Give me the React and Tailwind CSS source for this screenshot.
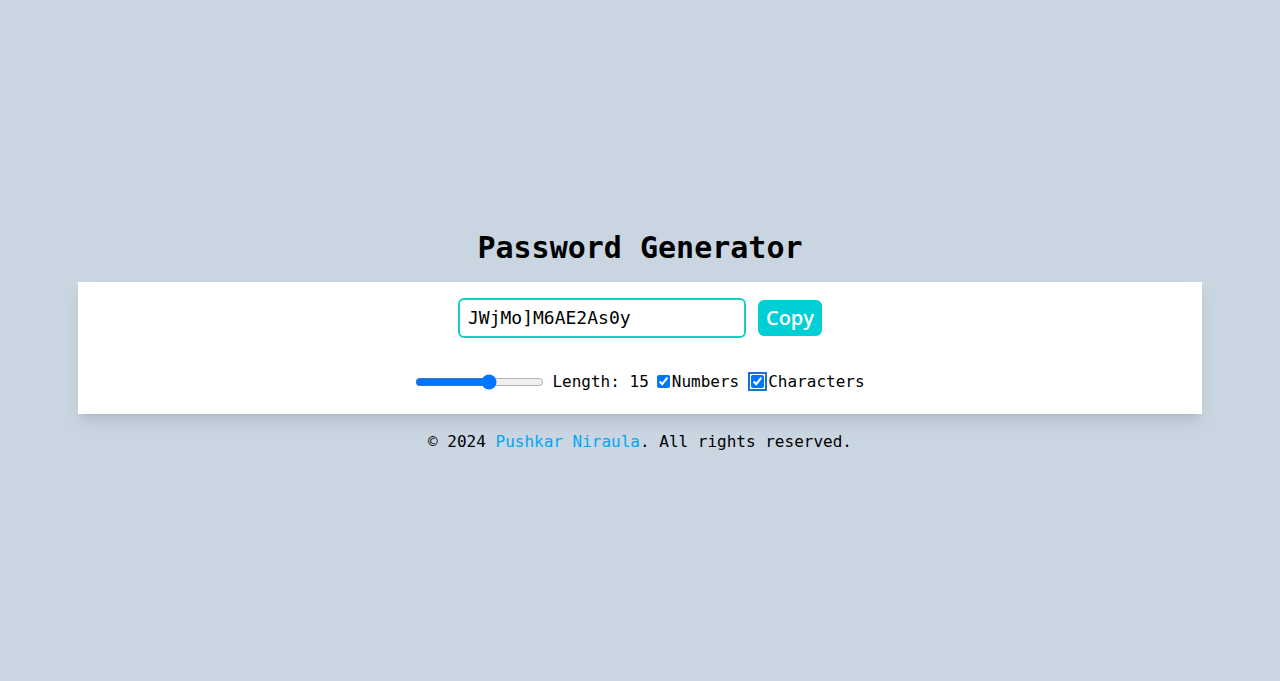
import { useState } from 'react';

const MONO = "font-['DejaVu_Sans_Mono',monospace]";

export default function App() {
  const [length, setLength] = useState(15);
  const [numbers, setNumbers] = useState(true);
  const [chars, setChars] = useState(true);
  const [password] = useState('JWjMo]M6AE2As0y');

  return (
    <div className={`min-h-screen bg-slate-300 flex flex-col items-center justify-center pt-[2px] text-black ${MONO}`}>
      <h1 className="text-3xl font-bold mb-4">Password Generator</h1>

      <div className="w-[1124px] bg-white shadow-lg pt-4 pb-5">
        <div className="flex items-center justify-center gap-3">
          <input
            type="text"
            readOnly
            value={password}
            className="w-[288px] h-10 border-2 border-[#14cfc4] rounded-md px-2 text-lg outline-none"
          />
          <button className="w-16 h-9 rounded-md bg-[#00cfd6] text-white text-xl font-semibold font-['Open_Sans',sans-serif]">
            Copy
          </button>
        </div>

        {/* controls */}
        <div className="flex items-center justify-center mt-8 h-6">
          <input
            type="range"
            min={1}
            max={25}
            value={length}
            onChange={(e) => setLength(Number(e.target.value))}
            className="cursor-pointer mr-2"
          />
          <span>Length: {length}</span>
          <label className="flex items-center ml-2">
            <input
              type="checkbox"
              checked={numbers}
              onChange={() => setNumbers(!numbers)}
              className="mr-[2px]"
            />
            Numbers
          </label>
          <label className="flex items-center ml-3">
            <input
              type="checkbox"
              checked={chars}
              onChange={() => setChars(!chars)}
              className="mr-1 outline-2 outline-[#1a6fe0] outline-offset-[1px] rounded-[3px]"
            />
            Characters
          </label>
        </div>
      </div>

      <p className="mt-4">
        © 2024 <a href="#" className="text-sky-500">Pushkar Niraula</a>. All rights reserved.
      </p>
    </div>
  );
}
